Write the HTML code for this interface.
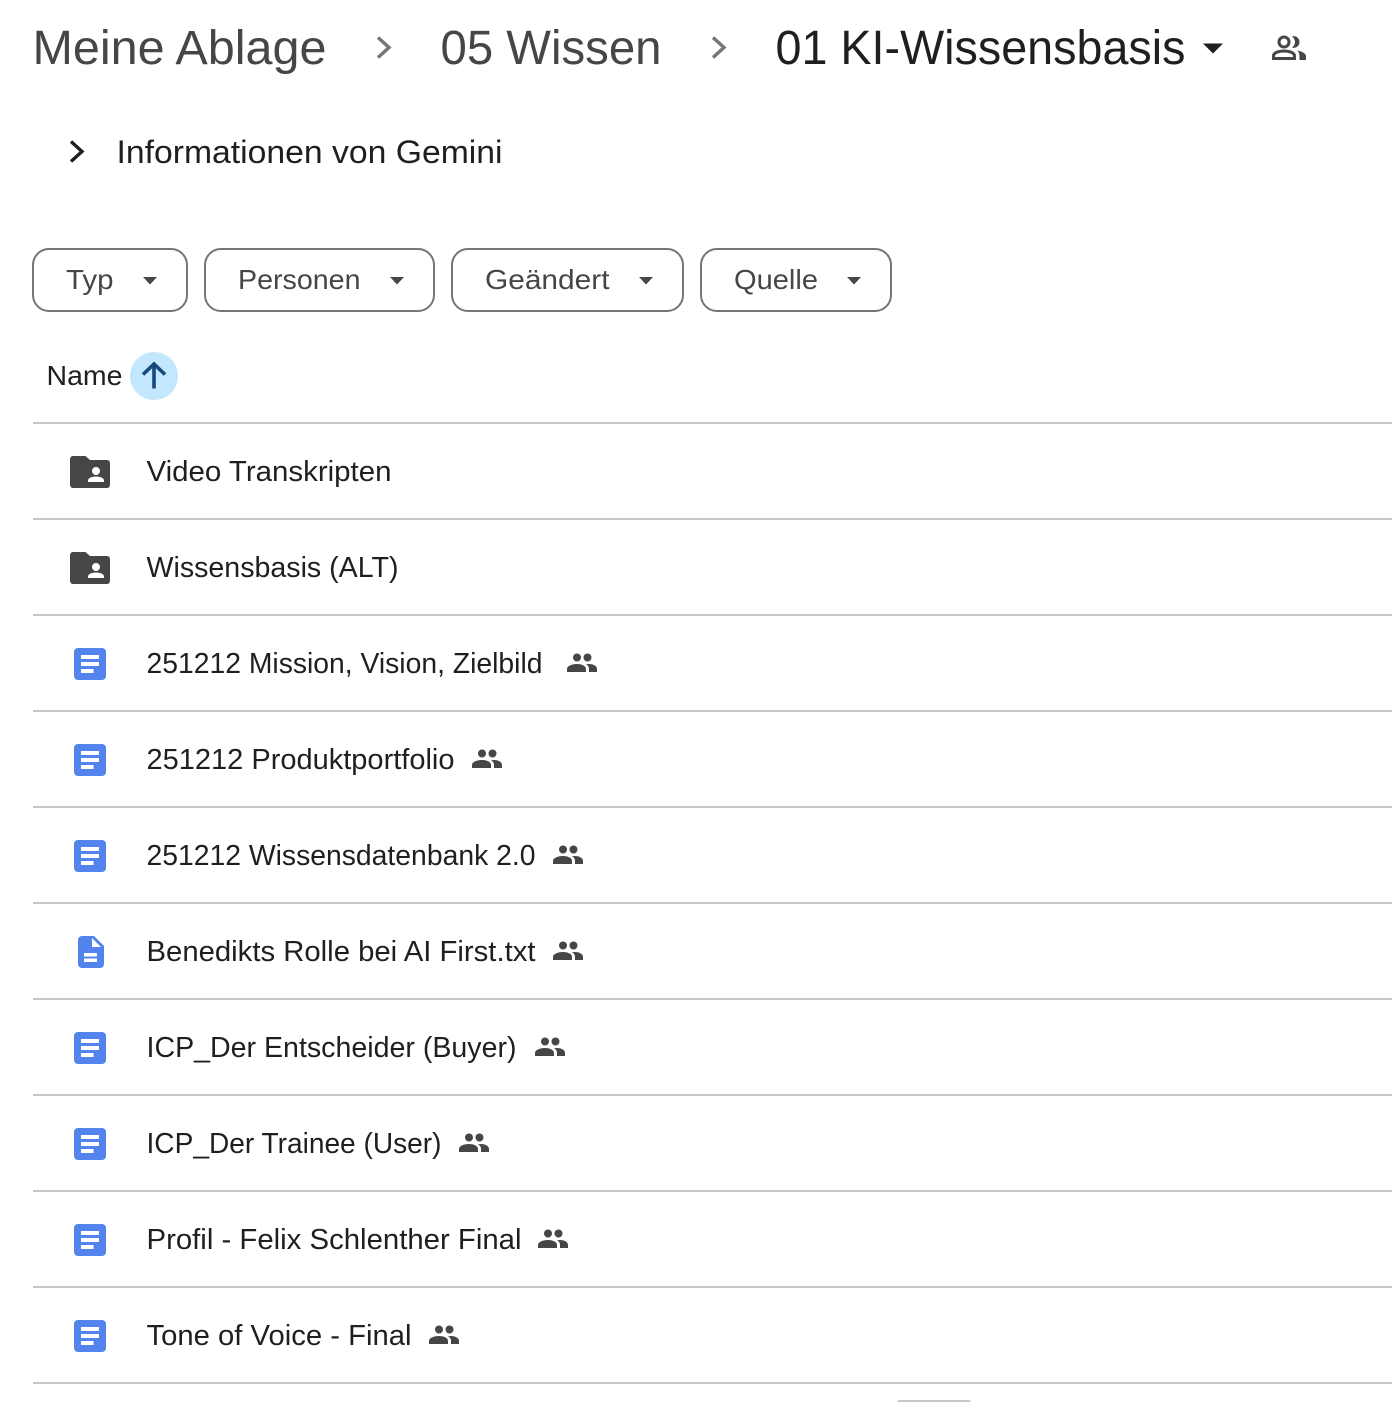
<!DOCTYPE html>
<html lang="de">
<head>
<meta charset="utf-8">
<title>01 KI-Wissensbasis</title>
<style>
html,body{margin:0;padding:0;background:#fff;width:1392px;height:1402px;overflow:hidden}
svg{display:block}
text{font-family:"Liberation Sans",sans-serif}
.r{font-size:29px;fill:#1f1f1f}
.f{font-size:28px;fill:#444746}
.b{font-size:48px;fill:#444746}
</style>
</head>
<body>
<svg width="1392" height="1402" viewBox="0 0 1392 1402" xmlns="http://www.w3.org/2000/svg">
<defs>
<g id="doc">
<rect x="0" y="0" width="32" height="32" rx="4" fill="#5383ec"/>
<rect x="7" y="7" width="18" height="4" fill="#fff"/>
<rect x="7" y="14" width="18" height="4" fill="#fff"/>
<rect x="7" y="21" width="12.5" height="4" fill="#fff"/>
</g>
<g id="folder">
<path d="M3 0H15.5L20 4H37A3 3 0 0 1 40 7V29A3 3 0 0 1 37 32H3A3 3 0 0 1 0 29V3A3 3 0 0 1 3 0Z" fill="#444746"/>
<circle cx="26" cy="15" r="4" fill="#fff"/>
<path d="M18 26V24.5C18 21.5 23 20.5 26 20.5S34 21.5 34 24.5V26Z" fill="#fff"/>
</g>
<g id="ppl" fill="#444746">
<circle cx="10" cy="3.5" r="4"/>
<circle cx="20.5" cy="3.5" r="4"/>
<path d="M0 18V15C0 11.5 6 10 10 10S19 11.5 19 15V18Z"/>
<path d="M22 18V15C22 13 21 11.5 19 10.3C20 10.1 21 10 22 10C25.5 10 30 11.5 30 15V18Z"/>
</g>
</defs>

<text class="b" x="32.5" y="64" textLength="294" lengthAdjust="spacingAndGlyphs">Meine Ablage</text>
<path d="M378 37.5L389 47.5L378 57.5" fill="none" stroke="#757575" stroke-width="3.4"/>
<text class="b" x="440.5" y="64" textLength="221" lengthAdjust="spacingAndGlyphs">05 Wissen</text>
<path d="M713 37.5L724 47.5L713 57.5" fill="none" stroke="#757575" stroke-width="3.4"/>
<text class="b" x="775.5" y="64" textLength="410" lengthAdjust="spacingAndGlyphs" style="fill:#1f1f1f">01 KI-Wissensbasis</text>
<path d="M1203 43.5H1223L1213 53.5Z" fill="#1f1f1f"/>
<g fill="none" stroke="#444746" stroke-width="3">
<circle cx="1284" cy="42" r="5"/>
<path d="M1273.5 58.5V56C1273.5 52.5 1279 51 1284 51S1294.5 52.5 1294.5 56V58.5Z"/>
</g>
<path d="M1292 36.2C1296 35.5 1299.5 38 1299.5 42S1296 48.5 1292 47.8C1294 46 1295 44 1295 42S1294 38 1292 36.2Z" fill="#444746"/>
<path d="M1297 50.5C1302 51.5 1306 53 1306 56.5V60H1299.5V56.5C1299.5 54 1299 52 1297 50.5Z" fill="#444746"/>

<path d="M71 141.5L82 151.5L71 161.5" fill="none" stroke="#1f1f1f" stroke-width="3.4"/>
<text x="116.5" y="163" font-size="32" fill="#1f1f1f" textLength="386" lengthAdjust="spacingAndGlyphs">Informationen von Gemini</text>

<g fill="#fff" stroke="#747775" stroke-width="2">
<rect x="33" y="249" width="154" height="62" rx="16"/>
<rect x="205" y="249" width="229" height="62" rx="16"/>
<rect x="452" y="249" width="231" height="62" rx="16"/>
<rect x="701" y="249" width="190" height="62" rx="16"/>
</g>
<text class="f" x="66" y="289" textLength="47.5" lengthAdjust="spacingAndGlyphs">Typ</text>
<text class="f" x="238" y="289" textLength="122.5" lengthAdjust="spacingAndGlyphs">Personen</text>
<text class="f" x="485" y="289" textLength="124.5" lengthAdjust="spacingAndGlyphs">Geändert</text>
<text class="f" x="734" y="289" textLength="84" lengthAdjust="spacingAndGlyphs">Quelle</text>
<g fill="#444746">
<path d="M143 277H157L150 284.5Z"/>
<path d="M390 277H404L397 284.5Z"/>
<path d="M639 277H653L646 284.5Z"/>
<path d="M847 277H861L854 284.5Z"/>
</g>

<text x="46.5" y="385" font-size="28" fill="#1f1f1f" textLength="76" lengthAdjust="spacingAndGlyphs">Name</text>
<circle cx="154" cy="376" r="24" fill="#c2e7ff"/>
<path d="M154 388.5V365M143 374.5L154 364L165 374.5" fill="none" stroke="#174a7c" stroke-width="3.6"/>

<g fill="#c7c7c7">
<rect x="33" y="422" width="1359" height="2"/>
<rect x="33" y="518" width="1359" height="2"/>
<rect x="33" y="614" width="1359" height="2"/>
<rect x="33" y="710" width="1359" height="2"/>
<rect x="33" y="806" width="1359" height="2"/>
<rect x="33" y="902" width="1359" height="2"/>
<rect x="33" y="998" width="1359" height="2"/>
<rect x="33" y="1094" width="1359" height="2"/>
<rect x="33" y="1190" width="1359" height="2"/>
<rect x="33" y="1286" width="1359" height="2"/>
<rect x="33" y="1382" width="1359" height="2"/>
<path d="M897 1402C897 1400.5 899 1400 901 1400H967C969 1400 971 1400.5 971 1402Z"/>
</g>

<use href="#folder" x="70" y="456"/>
<text class="r" x="146.5" y="481" textLength="245" lengthAdjust="spacingAndGlyphs">Video Transkripten</text>

<use href="#folder" x="70" y="552"/>
<text class="r" x="146.5" y="577" textLength="252" lengthAdjust="spacingAndGlyphs">Wissensbasis (ALT)</text>

<use href="#doc" x="74" y="648"/>
<text class="r" x="146.5" y="673" textLength="396" lengthAdjust="spacingAndGlyphs">251212 Mission, Vision, Zielbild</text>
<use href="#ppl" x="567" y="654"/>

<use href="#doc" x="74" y="744"/>
<text class="r" x="146.5" y="769" textLength="308" lengthAdjust="spacingAndGlyphs">251212 Produktportfolio</text>
<use href="#ppl" x="472" y="750"/>

<use href="#doc" x="74" y="840"/>
<text class="r" x="146.5" y="865" textLength="389" lengthAdjust="spacingAndGlyphs">251212 Wissensdatenbank 2.0</text>
<use href="#ppl" x="553" y="846"/>

<path d="M82 936H94L104 946V964A4 4 0 0 1 100 968H82A4 4 0 0 1 78 964V940A4 4 0 0 1 82 936Z" fill="#5383ec"/>
<path d="M92 938V947H101Z" fill="#fff"/>
<rect x="84" y="953" width="13" height="3.5" fill="#fff"/>
<rect x="84" y="958.5" width="13" height="3.5" fill="#fff"/>
<text class="r" x="146.5" y="961" textLength="389" lengthAdjust="spacingAndGlyphs">Benedikts Rolle bei AI First.txt</text>
<use href="#ppl" x="553" y="942"/>

<use href="#doc" x="74" y="1032"/>
<text class="r" x="146.5" y="1057" textLength="370" lengthAdjust="spacingAndGlyphs">ICP_Der Entscheider (Buyer)</text>
<use href="#ppl" x="535" y="1038"/>

<use href="#doc" x="74" y="1128"/>
<text class="r" x="146.5" y="1153" textLength="295" lengthAdjust="spacingAndGlyphs">ICP_Der Trainee (User)</text>
<use href="#ppl" x="459" y="1134"/>

<use href="#doc" x="74" y="1224"/>
<text class="r" x="146.5" y="1249" textLength="375" lengthAdjust="spacingAndGlyphs">Profil - Felix Schlenther Final</text>
<use href="#ppl" x="538" y="1230"/>

<use href="#doc" x="74" y="1320"/>
<text class="r" x="146.5" y="1345" textLength="265" lengthAdjust="spacingAndGlyphs">Tone of Voice - Final</text>
<use href="#ppl" x="429" y="1326"/>
</svg>
</body>
</html>
